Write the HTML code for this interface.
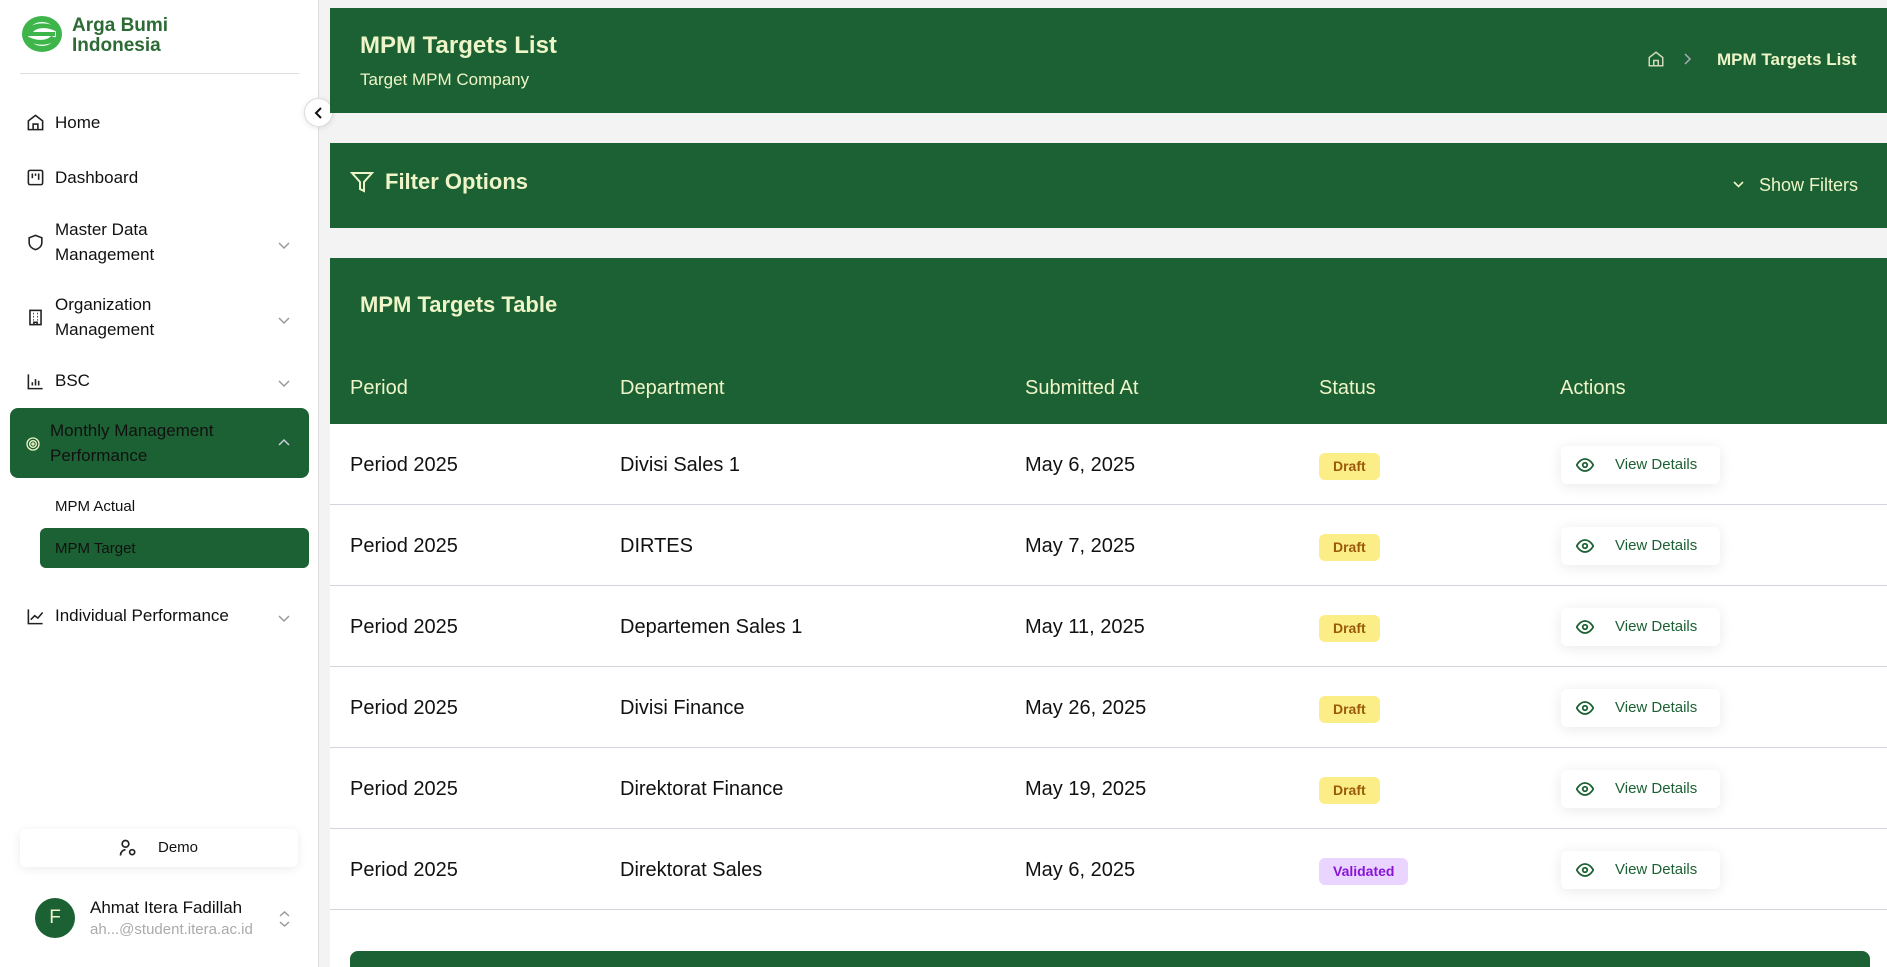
<!DOCTYPE html>
<html><head><meta charset="utf-8"><style>
*{box-sizing:border-box;margin:0;padding:0}
html,body{width:1887px;height:967px;overflow:hidden}
body{background:#f3f3f3;font-family:"Liberation Sans",Arial,sans-serif;position:relative;color:#111}
.sb{position:absolute;left:0;top:0;width:319px;height:967px;background:#fff;border-right:1px solid #ddd}
.g{background:#1c6133}
.lt{color:#eef5c8}
.abs{position:absolute}
.nav{position:absolute;left:55px;font-size:17px;color:#111;line-height:25px}
.ic{position:absolute;left:26px;width:19px;height:19px}
.chev{position:absolute;left:277px;width:14px;height:14px}
.card{position:absolute;left:330px;right:0}
.row{position:absolute;left:330px;right:0;height:81px;background:#fff;border-bottom:1px solid #d4d4de}
.row span{position:absolute;top:30px;font-size:20px;color:#111}
.badge{position:absolute;top:29px;left:989px;height:27px;border-radius:6px;font-size:14px;font-weight:bold;line-height:27px;padding:0 14px}
.btn{position:absolute;left:1231px;top:22px;width:159px;height:38px;background:#fff;border-radius:6px;box-shadow:0 2px 14px rgba(0,0,0,.09);font-size:15px;color:#1c6133;line-height:38px;padding-left:54px}
.btn svg{position:absolute;left:15px;top:11px}
</style></head><body>
<div class="sb">
 <svg class="abs" style="left:21px;top:15px" width="42" height="38" viewBox="0 0 42 38"><ellipse cx="21" cy="19" rx="20" ry="18" fill="#3db54a"/><ellipse cx="21" cy="19" rx="14" ry="12" fill="#fff"/><path d="M6 15c4-8 22-9 30-2l-2 3c-7-4-18-4-22 1h22v4H6z" fill="#3db54a"/><path d="M36 23c-4 8-22 9-30 2l2-3c7 4 18 4 22-1z" fill="#3db54a"/></svg>
 <div class="abs" style="left:72px;top:16px;font-size:19px;font-weight:bold;color:#2d6b35;line-height:20px">Arga Bumi<br>Indonesia</div>
 <div class="abs" style="left:20px;top:73px;width:279px;height:1px;background:#ddd"></div>
 <svg class="ic" style="top:113px" viewBox="0 0 24 24" fill="none" stroke="#222" stroke-width="2"><path d="M3 10l9-7 9 7v11H3z"/><path d="M9 21v-7h6v7"/></svg>
 <div class="nav" style="top:110px">Home</div>
 <svg class="ic" style="top:168px" viewBox="0 0 24 24" fill="none" stroke="#222" stroke-width="2"><rect x="3" y="3" width="18" height="18" rx="2"/><path d="M8 7v6M12 7v3M16 7v8"/></svg>
 <div class="nav" style="top:165px">Dashboard</div>
 <svg class="ic" style="top:233px" viewBox="0 0 24 24" fill="none" stroke="#222" stroke-width="2"><path d="M12 3l8 3v6c0 5-4 8-8 9-4-1-8-4-8-9V6z"/></svg>
 <div class="nav" style="top:217px">Master Data<br>Management</div>
 <svg class="chev" style="top:238px" viewBox="0 0 14 14" fill="none" stroke="#999" stroke-width="1.5"><path d="M2 5l5 5 5-5"/></svg>
 <svg class="ic" style="top:308px" viewBox="0 0 24 24" fill="none" stroke="#222" stroke-width="2"><rect x="5" y="3" width="14" height="18"/><path d="M9 7h1M14 7h1M9 11h1M14 11h1M9 15h1M14 15h1M10 21v-3h4v3"/></svg>
 <div class="nav" style="top:292px">Organization<br>Management</div>
 <svg class="chev" style="top:313px" viewBox="0 0 14 14" fill="none" stroke="#999" stroke-width="1.5"><path d="M2 5l5 5 5-5"/></svg>
 <svg class="ic" style="top:372px" viewBox="0 0 24 24" fill="none" stroke="#222" stroke-width="2"><path d="M3 3v18h18M8 17v-4M12 17v-8M16 17v-6"/></svg>
 <div class="nav" style="top:368px">BSC</div>
 <svg class="chev" style="top:376px" viewBox="0 0 14 14" fill="none" stroke="#999" stroke-width="1.5"><path d="M2 5l5 5 5-5"/></svg>
 <div class="abs g" style="left:10px;top:408px;width:299px;height:70px;border-radius:8px"></div>
 <svg class="abs" style="left:25px;top:436px" width="16" height="16" viewBox="0 0 24 24" fill="none" stroke="#eef5c8" stroke-width="2"><circle cx="12" cy="12" r="9"/><circle cx="12" cy="12" r="5"/><circle cx="12" cy="12" r="1.5"/></svg>
 <div class="nav lt" style="left:50px;top:418px">Monthly Management<br>Performance</div>
 <svg class="chev" style="top:436px" viewBox="0 0 14 14" fill="none" stroke="#ccd" stroke-width="1.5"><path d="M2 9l5-5 5 5"/></svg>
 <div class="nav" style="top:494px;font-size:15px">MPM Actual</div>
 <div class="abs g" style="left:40px;top:528px;width:269px;height:40px;border-radius:6px"></div>
 <div class="nav lt" style="top:536px;font-size:15px">MPM Target</div>
 <svg class="ic" style="top:607px" viewBox="0 0 24 24" fill="none" stroke="#222" stroke-width="2"><path d="M3 3v18h18M6 16l5-5 4 3 6-7"/></svg>
 <div class="nav" style="top:603px">Individual Performance</div>
 <svg class="chev" style="top:611px" viewBox="0 0 14 14" fill="none" stroke="#999" stroke-width="1.5"><path d="M2 5l5 5 5-5"/></svg>
 <div class="abs" style="left:20px;top:829px;width:278px;height:38px;background:#fff;border-radius:6px;box-shadow:0 2px 10px rgba(0,0,0,.08)"></div>
 <svg class="abs" style="left:118px;top:838px" width="20" height="20" viewBox="0 0 24 24" fill="none" stroke="#222" stroke-width="2"><circle cx="9" cy="7" r="4"/><path d="M3 21c0-4 3-7 6-7"/><circle cx="17" cy="17" r="3"/></svg>
 <div class="abs" style="left:158px;top:839px;font-size:15px">Demo</div>
 <div class="abs g" style="left:35px;top:898px;width:40px;height:40px;border-radius:50%;color:#eef5c8;font-size:19px;text-align:center;line-height:40px">F</div>
 <div class="abs" style="left:90px;top:898px;font-size:17px">Ahmat Itera Fadillah</div>
 <div class="abs" style="left:90px;top:921px;font-size:15px;color:#aaa">ah...@student.itera.ac.id</div>
 <svg class="abs" style="left:278px;top:909px" width="13" height="20" viewBox="0 0 13 20" fill="none" stroke="#999" stroke-width="1.5"><path d="M2 7l4.5-4 4.5 4M2 13l4.5 4 4.5-4"/></svg>
</div>
<div class="abs" style="left:304px;top:98px;width:29px;height:29px;border-radius:50%;background:#fff;border:1px solid #ddd;box-shadow:0 1px 6px rgba(0,0,0,.1)"><svg style="position:absolute;left:8px;top:7px" width="12" height="14" viewBox="0 0 12 14" fill="none" stroke="#111" stroke-width="2"><path d="M8 2L3 7l5 5"/></svg></div>

<div class="card g" style="top:8px;height:105px"></div>
<div class="abs lt" style="left:360px;top:32px;font-size:24px;font-weight:bold">MPM Targets List</div>
<div class="abs lt" style="left:360px;top:70px;font-size:17px">Target MPM Company</div>
<svg class="abs" style="left:1647px;top:50px" width="18" height="18" viewBox="0 0 24 24" fill="none" stroke="#cfd8b8" stroke-width="2"><path d="M3 10l9-7 9 7v11H3z"/><path d="M9 21v-7h6v7"/></svg>
<svg class="abs" style="left:1682px;top:53px" width="10" height="12" viewBox="0 0 10 12" fill="none" stroke="#aab" stroke-width="1.5"><path d="M3 1l5 5-5 5"/></svg>
<div class="abs lt" style="left:1717px;top:50px;font-size:17px;font-weight:bold">MPM Targets List</div>

<div class="card g" style="top:143px;height:85px"></div>
<svg class="abs" style="left:350px;top:170px" width="24" height="24" viewBox="0 0 24 24" fill="none" stroke="#eef5c8" stroke-width="2"><path d="M2 3h20l-8 9v9l-4-2v-7z"/></svg>
<div class="abs lt" style="left:385px;top:169px;font-size:22px;font-weight:bold">Filter Options</div>
<svg class="abs" style="left:1732px;top:179px" width="13" height="10" viewBox="0 0 13 10" fill="none" stroke="#eef5c8" stroke-width="1.6"><path d="M2 3l4.5 4.5L11 3"/></svg>
<div class="abs lt" style="left:1759px;top:175px;font-size:18px">Show Filters</div>

<div class="card" style="top:258px;height:709px;background:#fff"></div>
<div class="card g" style="top:258px;height:166px"></div>
<div class="abs lt" style="left:360px;top:292px;font-size:22px;font-weight:bold">MPM Targets Table</div>
<div class="abs lt" style="left:350px;top:377px;font-size:20px">Period</div>
<div class="abs lt" style="left:620px;top:377px;font-size:20px">Department</div>
<div class="abs lt" style="left:1025px;top:377px;font-size:20px">Submitted At</div>
<div class="abs lt" style="left:1319px;top:377px;font-size:20px">Status</div>
<div class="abs lt" style="left:1560px;top:377px;font-size:20px">Actions</div>

<div class="row" style="top:424px"><span style="left:20px">Period 2025</span><span style="left:290px">Divisi Sales 1</span><span style="left:695px">May 6, 2025</span><div class="badge" style="background:#fcee86;color:#9a5a0a">Draft</div><div class="btn"><svg width="18" height="16" viewBox="0 0 24 20" fill="none" stroke="#1c6133" stroke-width="2.4"><path d="M1 10s4-8 11-8 11 8 11 8-4 8-11 8S1 10 1 10z"/><circle cx="12" cy="10" r="3"/></svg>View Details</div></div>
<div class="row" style="top:505px"><span style="left:20px">Period 2025</span><span style="left:290px">DIRTES</span><span style="left:695px">May 7, 2025</span><div class="badge" style="background:#fcee86;color:#9a5a0a">Draft</div><div class="btn"><svg width="18" height="16" viewBox="0 0 24 20" fill="none" stroke="#1c6133" stroke-width="2.4"><path d="M1 10s4-8 11-8 11 8 11 8-4 8-11 8S1 10 1 10z"/><circle cx="12" cy="10" r="3"/></svg>View Details</div></div>
<div class="row" style="top:586px"><span style="left:20px">Period 2025</span><span style="left:290px">Departemen Sales 1</span><span style="left:695px">May 11, 2025</span><div class="badge" style="background:#fcee86;color:#9a5a0a">Draft</div><div class="btn"><svg width="18" height="16" viewBox="0 0 24 20" fill="none" stroke="#1c6133" stroke-width="2.4"><path d="M1 10s4-8 11-8 11 8 11 8-4 8-11 8S1 10 1 10z"/><circle cx="12" cy="10" r="3"/></svg>View Details</div></div>
<div class="row" style="top:667px"><span style="left:20px">Period 2025</span><span style="left:290px">Divisi Finance</span><span style="left:695px">May 26, 2025</span><div class="badge" style="background:#fcee86;color:#9a5a0a">Draft</div><div class="btn"><svg width="18" height="16" viewBox="0 0 24 20" fill="none" stroke="#1c6133" stroke-width="2.4"><path d="M1 10s4-8 11-8 11 8 11 8-4 8-11 8S1 10 1 10z"/><circle cx="12" cy="10" r="3"/></svg>View Details</div></div>
<div class="row" style="top:748px"><span style="left:20px">Period 2025</span><span style="left:290px">Direktorat Finance</span><span style="left:695px">May 19, 2025</span><div class="badge" style="background:#fcee86;color:#9a5a0a">Draft</div><div class="btn"><svg width="18" height="16" viewBox="0 0 24 20" fill="none" stroke="#1c6133" stroke-width="2.4"><path d="M1 10s4-8 11-8 11 8 11 8-4 8-11 8S1 10 1 10z"/><circle cx="12" cy="10" r="3"/></svg>View Details</div></div>
<div class="row" style="top:829px"><span style="left:20px">Period 2025</span><span style="left:290px">Direktorat Sales</span><span style="left:695px">May 6, 2025</span><div class="badge" style="background:#e9d5ff;color:#8a14d6">Validated</div><div class="btn"><svg width="18" height="16" viewBox="0 0 24 20" fill="none" stroke="#1c6133" stroke-width="2.4"><path d="M1 10s4-8 11-8 11 8 11 8-4 8-11 8S1 10 1 10z"/><circle cx="12" cy="10" r="3"/></svg>View Details</div></div>
<div class="abs g" style="left:350px;top:951px;width:1520px;height:16px;border-radius:8px 8px 0 0"></div>
</body></html>
